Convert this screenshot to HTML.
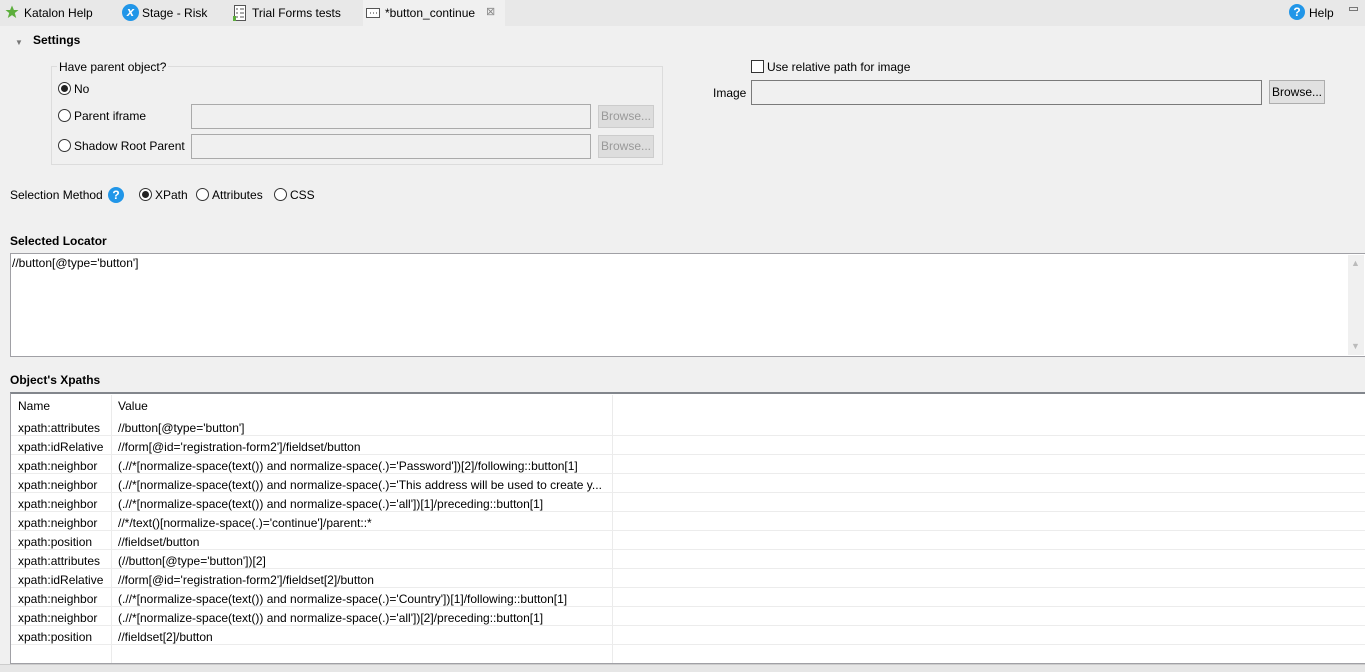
<!DOCTYPE html>
<html><head><meta charset="utf-8"><style>
*{margin:0;padding:0;box-sizing:border-box}
body{width:1365px;height:672px;background:#f0f0f0;font-family:"Liberation Sans",sans-serif;font-size:12px;color:#000;position:relative;overflow:hidden}
.a{position:absolute;white-space:nowrap}
.b{font-weight:bold}
.radio{position:absolute;width:13px;height:13px;border:1px solid #333;border-radius:50%;background:#fff}
.radio.on::after{content:"";position:absolute;left:2px;top:2px;width:7px;height:7px;border-radius:50%;background:#222}
.inp{position:absolute;border:1px solid #aaa;background:#f0f0f0}
.btn{position:absolute;border:1px solid #adadad;background:#e1e1e1;text-align:center;line-height:21px}
.q{position:absolute;width:16px;height:16px;border-radius:50%;background:#2196e8;color:#fff;font-weight:bold;font-size:12px;text-align:center;line-height:16px}
.row{position:absolute;left:11px;width:1354px;height:19px;border-bottom:1px solid #ececec}
.row span{position:absolute;top:4px}
</style></head><body>
<div class="a" style="left:0;top:0;width:1365px;height:26px;background:#e8e8e8"></div>
<div class="a" style="left:363px;top:0;width:142px;height:26px;background:#f0f0f0"></div>
<svg class="a" style="left:5px;top:5px" width="14" height="14" viewBox="0 0 14 14"><path d="M7 0.5L8.9 5H13.5L9.8 8L11.2 13L7 10.1L2.8 13L4.2 8L0.5 5H5.1Z" fill="#5cae3c"/></svg>
<div class="a" style="left:24px;top:6px">Katalon Help</div>
<div class="a" style="left:122px;top:4px;width:17px;height:17px;border-radius:50%;background:#2196e8;color:#fff;font-style:italic;font-weight:bold;text-align:center;line-height:16px;font-size:13px">x</div>
<div class="a" style="left:142px;top:6px">Stage - Risk</div>
<svg class="a" style="left:233px;top:5px" width="14" height="16" viewBox="0 0 14 16"><rect x="1.5" y="0.5" width="11" height="15" fill="#fff" stroke="#555"/><path d="M3 4h2M7 4h4M3 8h2M7 8h4M3 12h2M7 12h4" stroke="#555"/><rect x="0" y="11" width="3" height="5" fill="#5cae3c"/></svg>
<div class="a" style="left:252px;top:6px">Trial Forms tests</div>
<svg class="a" style="left:366px;top:7px" width="14" height="12" viewBox="0 0 14 12"><rect x="0.5" y="1.5" width="13" height="9" fill="#fff" stroke="#555"/><path d="M4 6h1M7 6h1M10 6h1" stroke="#333"/></svg>
<div class="a" style="left:385px;top:6px">*button_continue</div>
<div class="a" style="left:486px;top:5px;color:#888;font-size:11px">⊠</div>
<div class="q" style="left:1289px;top:4px">?</div>
<div class="a" style="left:1309px;top:6px">Help</div>
<div class="a" style="left:1349px;top:7px;width:9px;height:4px;border:1px solid #777"></div>

<div class="a" style="left:15px;top:38px;font-size:8px;color:#777">▼</div>
<div class="a b" style="left:33px;top:33px">Settings</div>

<div class="a" style="left:51px;top:66px;width:612px;height:99px;border:1px solid #dcdcdc"></div>
<div class="a" style="left:57px;top:60px;background:#f0f0f0;padding:0 2px">Have parent object?</div>
<div class="radio on" style="left:58px;top:82px"></div><div class="a" style="left:74px;top:82px">No</div>
<div class="radio" style="left:58px;top:109px"></div><div class="a" style="left:74px;top:109px">Parent iframe</div>
<div class="inp" style="left:191px;top:104px;width:400px;height:25px"></div>
<div class="btn" style="left:598px;top:105px;width:56px;height:23px;color:#999;background:#ddd;border-color:#ccc">Browse...</div>
<div class="radio" style="left:58px;top:139px"></div><div class="a" style="left:74px;top:139px">Shadow Root Parent</div>
<div class="inp" style="left:191px;top:134px;width:400px;height:25px"></div>
<div class="btn" style="left:598px;top:135px;width:56px;height:23px;color:#999;background:#ddd;border-color:#ccc">Browse...</div>

<div class="a" style="left:751px;top:60px;width:13px;height:13px;border:1px solid #333;background:#fff"></div>
<div class="a" style="left:767px;top:60px">Use relative path for image</div>
<div class="a" style="left:713px;top:86px">Image</div>
<div class="inp" style="left:751px;top:80px;width:511px;height:25px;border-color:#7a7a7a"></div>
<div class="btn" style="left:1269px;top:80px;width:56px;height:24px;color:#000;line-height:23px">Browse...</div>

<div class="a" style="left:10px;top:188px">Selection Method</div>
<div class="q" style="left:108px;top:187px">?</div>
<div class="radio on" style="left:139px;top:188px"></div><div class="a" style="left:155px;top:188px">XPath</div>
<div class="radio" style="left:196px;top:188px"></div><div class="a" style="left:212px;top:188px">Attributes</div>
<div class="radio" style="left:274px;top:188px"></div><div class="a" style="left:290px;top:188px">CSS</div>

<div class="a b" style="left:10px;top:234px">Selected Locator</div>
<div class="a" style="left:10px;top:253px;width:1355px;height:104px;background:#fff;border-top:1px solid #a0a0a5;border-left:1px solid #a0a0a5;border-bottom:1px solid #a0a0a5"></div>
<div class="a" style="left:1348px;top:255px;width:16px;height:100px;background:#f0f0f0"></div>
<div class="a" style="left:1351px;top:258px;color:#bbb;font-size:9px">▲</div>
<div class="a" style="left:1351px;top:341px;color:#bbb;font-size:9px">▼</div>
<div class="a" style="left:12px;top:256px">//button[@type='button']</div>

<div class="a b" style="left:10px;top:373px">Object's Xpaths</div>
<div class="a" style="left:10px;top:392px;width:1355px;height:272px;background:#fff;border-top:2px solid #82868c;border-left:1px solid #a0a0a5;border-bottom:1px solid #a0a0a5"></div>
<div class="a" style="left:111px;top:395px;width:1px;height:268px;background:#ebebeb"></div>
<div class="a" style="left:612px;top:395px;width:1px;height:268px;background:#ebebeb"></div>
<div class="a" style="left:18px;top:399px">Name</div>
<div class="a" style="left:118px;top:399px">Value</div>
<div class="a" style="left:0;top:664px;width:1365px;height:8px;background:#e6e6e6;border-top:1px solid #ccc"></div>

<div class="row" style="top:417px"><span style="left:7px">xpath:attributes</span><span style="left:107px">//button[@type='button']</span></div>
<div class="row" style="top:436px"><span style="left:7px">xpath:idRelative</span><span style="left:107px">//form[@id='registration-form2']/fieldset/button</span></div>
<div class="row" style="top:455px"><span style="left:7px">xpath:neighbor</span><span style="left:107px">(.//*[normalize-space(text()) and normalize-space(.)='Password'])[2]/following::button[1]</span></div>
<div class="row" style="top:474px"><span style="left:7px">xpath:neighbor</span><span style="left:107px">(.//*[normalize-space(text()) and normalize-space(.)='This address will be used to create y...</span></div>
<div class="row" style="top:493px"><span style="left:7px">xpath:neighbor</span><span style="left:107px">(.//*[normalize-space(text()) and normalize-space(.)='all'])[1]/preceding::button[1]</span></div>
<div class="row" style="top:512px"><span style="left:7px">xpath:neighbor</span><span style="left:107px">//*/text()[normalize-space(.)='continue']/parent::*</span></div>
<div class="row" style="top:531px"><span style="left:7px">xpath:position</span><span style="left:107px">//fieldset/button</span></div>
<div class="row" style="top:550px"><span style="left:7px">xpath:attributes</span><span style="left:107px">(//button[@type='button'])[2]</span></div>
<div class="row" style="top:569px"><span style="left:7px">xpath:idRelative</span><span style="left:107px">//form[@id='registration-form2']/fieldset[2]/button</span></div>
<div class="row" style="top:588px"><span style="left:7px">xpath:neighbor</span><span style="left:107px">(.//*[normalize-space(text()) and normalize-space(.)='Country'])[1]/following::button[1]</span></div>
<div class="row" style="top:607px"><span style="left:7px">xpath:neighbor</span><span style="left:107px">(.//*[normalize-space(text()) and normalize-space(.)='all'])[2]/preceding::button[1]</span></div>
<div class="row" style="top:626px"><span style="left:7px">xpath:position</span><span style="left:107px">//fieldset[2]/button</span></div>
</body></html>
